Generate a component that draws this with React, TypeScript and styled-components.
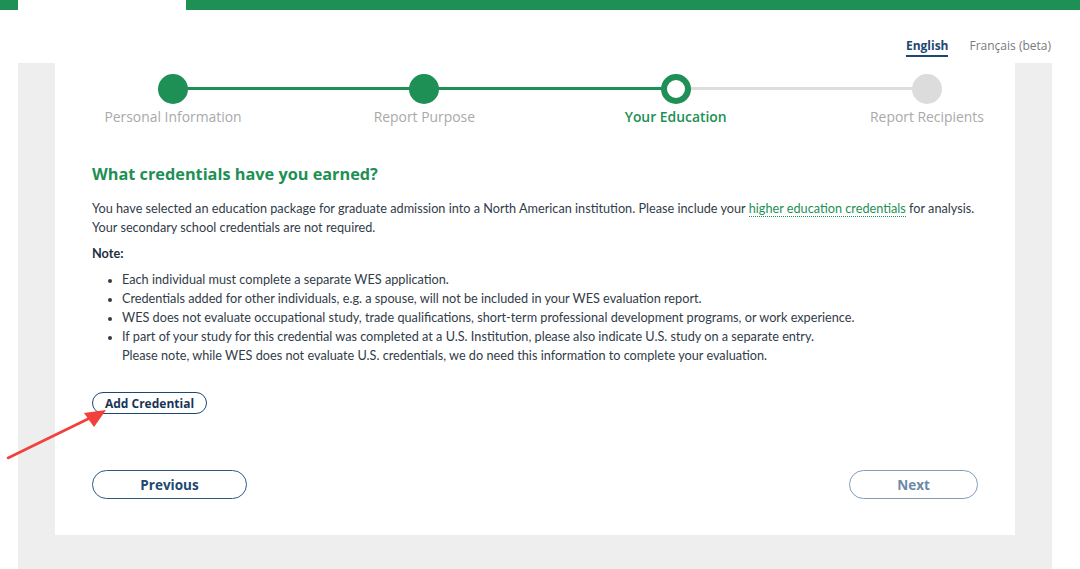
import React from 'react'
import styled, { createGlobalStyle } from 'styled-components'

const GREEN = '#1e8f55'
const NAVY = '#1d4872'

const GlobalStyle = createGlobalStyle`
  html, body {
    margin: 0;
    padding: 0;
    background: #ffffff;
  }
  body {
    font-family: Lato, "Liberation Sans", sans-serif;
    overflow: hidden;
  }
`

const steps = [
  { label: 'Personal Information', state: 'done' },
  { label: 'Report Purpose', state: 'done' },
  { label: 'Your Education', state: 'current' },
  { label: 'Report Recipients', state: 'todo' },
]

const notes = [
  'Each individual must complete a separate WES application.',
  'Credentials added for other individuals, e.g. a spouse, will not be included in your WES evaluation report.',
  'WES does not evaluate occupational study, trade qualifications, short-term professional development programs, or work experience.',
]

type StepState = 'done' | 'current' | 'todo'

const App: React.FC = () => {
  return (
    <Page>
      <GlobalStyle />
      <TopBar>
        <TopSegment width="18px" />
        <TopGap />
        <TopSegment width="auto" grow />
      </TopBar>
      <LangRow>
        <LangLink active>English</LangLink>
        <LangLink>Français (beta)</LangLink>
      </LangRow>
      <Panel>
        <Card>
          <Stepper>
            {steps.map((s) => (
              <Step key={s.label}>
                <StepDot state={s.state as StepState} />
                <StepLabel state={s.state as StepState}>{s.label}</StepLabel>
              </Step>
            ))}
          </Stepper>

          <Title>What credentials have you earned?</Title>
          <Paragraph>
            You have selected an education package for graduate admission into a North American institution. Please include your{' '}
            <DottedLink href="#">higher education credentials</DottedLink> for analysis.
            <br />
            Your secondary school credentials are not required.
          </Paragraph>
          <NoteHeading>Note:</NoteHeading>
          <NoteList>
            {notes.map((n) => (
              <li key={n}>{n}</li>
            ))}
            <li>
              If part of your study for this credential was completed at a U.S. Institution, please also indicate U.S. study on a separate entry.
              <br />
              Please note, while WES does not evaluate U.S. credentials, we do need this information to complete your evaluation.
            </li>
          </NoteList>

          <AddRow>
            <SmallButton>Add Credential</SmallButton>
          </AddRow>

          <NavRow>
            <NavButton width="155px">Previous</NavButton>
            <NavButton width="129px" disabled>Next</NavButton>
          </NavRow>
        </Card>
      </Panel>

      <Arrow width="110" height="60" viewBox="0 0 110 60">
        <line x1="8" y1="58" x2="92" y2="17" stroke="#f2403a" strokeWidth="2.6" strokeLinecap="round" />
        <polygon points="106,10 84,13 94,27" fill="#f2403a" />
      </Arrow>
    </Page>
  )
}

const Page = styled.div`
  position: relative;
  width: 1080px;
  height: 569px;
  overflow: hidden;
`

const TopBar = styled.div`
  display: flex;
  height: 10px;
`

const TopSegment = styled.div<{ width: string; grow?: boolean }>`
  width: ${props => props.width};
  flex: ${props => (props.grow ? 1 : 'none')};
  background: ${GREEN};
`

const TopGap = styled.div`
  width: 168px;
  background: #ffffff;
`

const LangRow = styled.div`
  display: flex;
  justify-content: flex-end;
  align-items: flex-end;
  gap: 21px;
  height: 53px;
  padding: 0 29px 6px 0;
  box-sizing: border-box;
`

const LangLink = styled.a<{ active?: boolean }>`
  font-family: "Open Sans", "Liberation Sans", sans-serif;
  font-size: 12px;
  line-height: 16px;
  font-weight: ${props => (props.active ? 700 : 400)};
  color: ${props => (props.active ? NAVY : '#7a7a7a')};
  text-decoration: none;
  padding-bottom: 1px;
  border-bottom: 2px solid ${props => (props.active ? NAVY : 'transparent')};
`

const Panel = styled.div`
  background: #eeeeee;
  margin: 0 28px 0 18px;
  padding: 0 37px 40px;
`

const Card = styled.div`
  background: #ffffff;
  padding: 11px 37px 37px;
  box-sizing: border-box;
  height: 472px;
`

const Stepper = styled.div`
  display: grid;
  grid-template-columns: repeat(4, 140px);
  justify-content: space-between;
  margin: 0 -19px 0 11px;
  background-image: linear-gradient(to right, ${GREEN} 66.67%, #dddddd 66.67%);
  background-size: calc(100% - 140px) 3px;
  background-position: 70px 13px;
  background-repeat: no-repeat;
`

const Step = styled.div`
  display: flex;
  flex-direction: column;
  align-items: center;
  gap: 5px;
`

const StepDot = styled.div<{ state: StepState }>`
  width: 30px;
  height: 30px;
  border-radius: 50%;
  box-sizing: border-box;
  background: ${props => (props.state === 'current' ? '#ffffff' : props.state === 'done' ? GREEN : '#dcdcdc')};
  border: ${props => (props.state === 'current' ? `6px solid ${GREEN}` : 'none')};
`

const StepLabel = styled.div<{ state: StepState }>`
  font-family: "Open Sans", "Liberation Sans", sans-serif;
  font-size: 13.9px;
  line-height: 16px;
  white-space: nowrap;
  font-weight: ${props => (props.state === 'current' ? 600 : 400)};
  color: ${props => (props.state === 'current' ? GREEN : '#a9a9a9')};
`

const Title = styled.h2`
  font-family: "Open Sans", "Liberation Sans", sans-serif;
  font-size: 16.3px;
  font-weight: 700;
  line-height: 20px;
  color: ${GREEN};
  margin: 39px 0 15px;
`

const Paragraph = styled.p`
  font-size: 12.7px;
  line-height: 19px;
  color: #323c48;
  margin: 0 0 7px;
`

const DottedLink = styled.a`
  color: ${GREEN};
  text-decoration: none;
  border-bottom: 1px dotted ${GREEN};
`

const NoteHeading = styled.div`
  font-size: 12.7px;
  line-height: 19px;
  font-weight: 700;
  color: #1e2f40;
  margin-bottom: 7px;
`

const NoteList = styled.ul`
  margin: 0;
  padding-left: 30px;
  font-size: 12.7px;
  line-height: 19px;
  color: #323c48;

  li::marker {
    font-size: 11px;
  }
`

const AddRow = styled.div`
  display: flex;
  margin-top: 27px;
`

const SmallButton = styled.button`
  font-family: "Open Sans", "Liberation Sans", sans-serif;
  font-size: 12px;
  font-weight: 700;
  color: #1a3455;
  background: #ffffff;
  border: 1px solid ${NAVY};
  border-radius: 12px;
  height: 22px;
  width: 115px;
  padding: 0;
  cursor: pointer;
`

const NavRow = styled.div`
  display: flex;
  justify-content: space-between;
  margin-top: 56px;
`

const NavButton = styled.button<{ width: string }>`
  font-family: "Open Sans", "Liberation Sans", sans-serif;
  font-size: 13.5px;
  font-weight: 700;
  height: 29px;
  width: ${props => props.width};
  border-radius: 15px;
  background: #ffffff;
  padding: 0;
  color: ${NAVY};
  border: 1px solid #2d5984;

  &:disabled {
    color: #6a8aa8;
    border-color: #7f9dba;
  }
`

const Arrow = styled.svg`
  position: absolute;
  left: 0;
  top: 400px;
`

export default App
